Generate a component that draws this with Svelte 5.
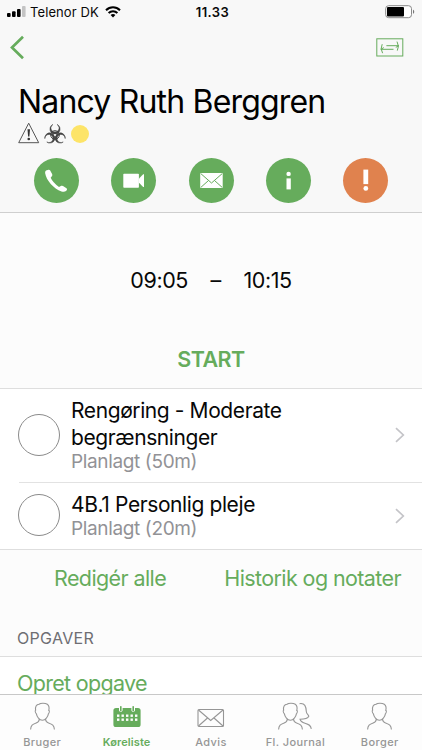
<script lang="ts">
  type Task = { title: string[]; planned: string };

  const name = "Nancy Ruth Berggren";
  const actions = ["phone", "video", "mail", "info", "alert"];

  const tasks: Task[] = [
    { title: ["Rengøring - Moderate", "begrænsninger"], planned: "Planlagt (50m)" },
    { title: ["4B.1 Personlig pleje"], planned: "Planlagt (20m)" },
  ];

  const tabs = [
    { id: "bruger", label: "Bruger", icon: "person" },
    { id: "koreliste", label: "Køreliste", icon: "calendar" },
    { id: "advis", label: "Advis", icon: "mail" },
    { id: "journal", label: "Fl. Journal", icon: "people" },
    { id: "borger", label: "Borger", icon: "person" },
  ];

  let active = $state("koreliste");
</script>

{#snippet person()}
  <path
    d="M5.6 8.2C5 4.6 6.4 2.4 9 2.2C10.6 1 15 .8 17.3 2.2C19.4 3.6 19.3 6.2 18.8 8.4C19.7 8.5 19.5 10.8 18.4 11.8C17.9 14.8 15.5 18 12.4 18.2C9.3 18 6.9 14.8 6.4 11.8C5.2 10.8 4.9 8.5 5.6 8.2ZM9.2 17.2C9.3 19.6 8.6 20.1 6.2 21C2.5 22.3 .8 23.2 .6 27.6M15.6 17.2C15.6 19.6 16.3 20.1 18.6 21C22.3 22.3 24.2 23.2 24.4 27.6"
  />
{/snippet}

<div class="screen">
  <header class="top">
    <div class="status">
      <div class="carrier">
        <svg width="19" height="12" viewBox="0 0 19 12">
          <rect x="0" y="7" width="3.6" height="4" rx="1" />
          <rect x="5" y="5.2" width="3.6" height="5.8" rx="1" />
          <rect x="10" y="3" width="3.6" height="8" rx="1" />
          <rect x="15" y="0" width="3.6" height="11" rx="1" fill="#c4c4c4" />
        </svg>
        <span>Telenor DK</span>
        <svg class="wifi" width="16" height="12" viewBox="0 0 16 12">
          <g fill="none" stroke="#000" stroke-width="2">
            <path d="M1 4.3C5 .3 11 .3 15 4.3" />
            <path d="M3.6 7C6.1 4.5 9.9 4.5 12.4 7" />
          </g>
          <path d="M5.6 8.9C7 7.6 9 7.6 10.4 8.9L8 11.4Z" />
        </svg>
      </div>
      <span class="clock">11.33</span>
      <svg class="battery" width="31" height="14" viewBox="0 0 31 14">
        <rect x=".7" y=".7" width="25.8" height="12" rx="3" fill="#fff" stroke="#888" />
        <rect x="2" y="2" width="17" height="9.4" rx="1" />
        <path d="M28 4.7C29.6 5 29.6 8.4 28 8.7Z" fill="#777" />
      </svg>
    </div>

    <nav class="nav">
      <button aria-label="Tilbage">
        <svg width="15" height="25" viewBox="0 0 15 25">
          <path d="M13 1.8L2 12.5L13 23.2" fill="none" stroke="#66ac5c" stroke-width="2.7" />
        </svg>
      </button>
      <button aria-label="Skift">
        <svg width="28" height="19" viewBox="0 0 28 19" fill="none" stroke="#66ac5c">
          <rect x=".8" y=".8" width="26" height="17.2" />
          <path d="M6.2 6.2Q3.9 10.8 6.6 15.2M4.8 11.3H17.5M21 3.6Q23.7 8.3 21.3 12.6M10.4 7.7H22.7M4.8 11.3L7.8 9.6M22.7 7.7L19.8 9.4" />
        </svg>
      </button>
    </nav>

    <h1>{name}</h1>
    <div class="flags">
      <svg width="22" height="22" viewBox="0 0 22 22">
        <path d="M10.7 1.2L20.7 20.7H.7Z" fill="none" stroke="#555" stroke-width="1" />
        <path d="M9.5 7.3H12L11.4 14.5H10.1Z" fill="#333" />
        <circle cx="10.75" cy="17" r="1.3" fill="#333" />
      </svg>
      <svg class="biohazard" width="22" height="22" viewBox="0 0 22 22" fill="none" stroke="#444">
        <circle cx="11" cy="13" r="4.3" stroke-width="1" />
        {#each [0, 120, 240] as angle}
          <path
            transform="rotate({angle} 11 13)"
            d="M9 2.4A5.1 5.1 0 1 0 13 2.4A4.1 4.1 0 1 1 9 2.4Z"
            fill="#444"
            stroke-width=".5"
          />
        {/each}
        <circle cx="11" cy="13" r=".9" fill="#f8f8f8" stroke="none" />
      </svg>
      <span class="dot"></span>
    </div>

    <div class="actions">
      {#each actions as action}
        <button class="action" class:alert={action === "alert"} aria-label={action}>
          <svg width="45" height="45" viewBox="0 0 45 45" fill="#fff">
            {#if action === "phone"}
              <path d="M12 12.5L14.5 11.7Q15.7 11.5 16.2 12.6L18.2 16.3Q18.6 17.2 18 18L16.7 19.8Q18.7 24.5 25 29L27.3 27.8Q28.2 27.4 29 28L32.5 30.3Q33.3 31 32.9 31.9L32 33Q30.5 34.3 27.5 33.5C19.5 30.5 12.3 22.5 11.1 15Q11 13.2 12 12.5Z" />
            {:else if action === "video"}
              <rect x="12.3" y="15.7" width="15.6" height="14" rx=".7" />
              <path d="M28 20.5L32.2 16.3H33V29H32.2L28 24.8Z" />
            {:else if action === "mail"}
              <rect x="11.2" y="15" width="22.5" height="15" rx=".6" />
              <path d="M11.7 15.5L22.5 25L33.3 15.5M11.7 29.5L19.5 22.5M33.3 29.5L25.5 22.5" fill="none" stroke="#66ac5c" />
            {:else if action === "info"}
              <circle cx="22.6" cy="15.9" r="2.2" />
              <rect x="20.5" y="20.4" width="4.3" height="11" />
            {:else}
              <rect x="20.4" y="11.6" width="4.8" height="14.5" />
              <circle cx="22.8" cy="30.4" r="2.4" />
            {/if}
          </svg>
        </button>
      {/each}
    </div>
  </header>

  <section class="visit">
    <div class="times">
      <span>09:05</span>
      <span>–</span>
      <span>10:15</span>
    </div>
    <button class="start">START</button>
  </section>

  <ul class="tasks">
    {#each tasks as task}
      <li>
        <span class="check"></span>
        <div class="task">
          <div class="text">
            {#each task.title as line}
              <div class="title">{line}</div>
            {/each}
            <div class="planned">{task.planned}</div>
          </div>
          <svg width="10" height="16" viewBox="0 0 10 16">
            <path d="M1 1.2L8.3 8L1 14.8" fill="none" stroke="#c4c4c8" stroke-width="1.7" />
          </svg>
        </div>
      </li>
    {/each}
  </ul>

  <div class="links">
    <button class="edit">Redigér alle</button>
    <button class="history">Historik og notater</button>
  </div>

  <h2>OPGAVER</h2>
  <div class="create">
    <button>Opret opgave</button>
  </div>

  <nav class="tabs">
    {#each tabs as tab}
      <button class:active={active === tab.id} onclick={() => (active = tab.id)}>
        {#if tab.icon === "person"}
          <svg width="25" height="29" viewBox="0 0 25 29">{@render person()}</svg>
        {:else if tab.icon === "calendar"}
          <svg width="28" height="29" viewBox="0 0 28 29">
            <path
              class="solid"
              d="M3 6H6V8.5Q7.8 11.5 9.6 8.5V6H18.4V8.5Q20.2 11.5 22 8.5V6H25Q27.6 6 27.6 8.6V22.4Q27.6 25 25 25H3Q.4 25 .4 22.4V8.6Q.4 6 3 6Z"
            />
            <rect class="solid" x="7" y="4" width="1.6" height="5.5" rx=".7" />
            <rect class="solid" x="19.4" y="4" width="1.6" height="5.5" rx=".7" />
            {#each [12.5, 16.5] as y}
              {#each [4, 8.5, 13, 17.5, 22] as x}
                <rect class="hole" {x} {y} width="2.4" height="2.4" />
              {/each}
            {/each}
          </svg>
        {:else if tab.icon === "mail"}
          <svg width="28" height="29" viewBox="0 0 28 29">
            <rect x="1" y="7.5" width="25.5" height="17" rx="1" />
            <path d="M1.5 8L13.7 18.5L26 8M1.5 24L10.5 16M26 24L17 16" />
          </svg>
        {:else}
          <svg width="34" height="29" viewBox="0 0 34 29">
            {@render person()}
            <path d="M21.5 1.7C27 .8 28 4.5 28.3 9.5C28.5 12.3 30.6 12.7 30.8 14.2C29.5 17 25 17.2 22 17.2C22.5 19.5 23.5 20.2 27 21.2C31.2 22.5 32.8 23.5 33.3 26.8" />
          </svg>
        {/if}
        <span>{tab.label}</span>
      </button>
    {/each}
  </nav>
</div>

<style>
  :global(body) {
    margin: 0;
    overflow: hidden;
  }

  .screen {
    width: 422px;
    height: 750px;
    display: flex;
    flex-direction: column;
    overflow: hidden;
    background: #fcfcfc;
    color: #080808;
    font-family: Inter, "Liberation Sans", sans-serif;
  }

  button {
    padding: 0;
    border: none;
    background: none;
    color: #66ac5c;
    font: inherit;
    letter-spacing: inherit;
    white-space: nowrap;
  }

  svg {
    display: block;
    flex-shrink: 0;
  }

  .top {
    height: 212px;
    flex-shrink: 0;
    background: #f8f8f8;
    border-bottom: 1px solid #cfcfcf;
  }

  .status {
    height: 24px;
    display: grid;
    grid-template-columns: 1fr auto 1fr;
    align-items: center;
    padding: 0 6px 0 7px;
    box-sizing: border-box;
    font-size: 13px;
  }

  .carrier {
    display: flex;
    align-items: center;
    gap: 4px;
    letter-spacing: 0.1px;
  }

  .wifi {
    margin-left: 2px;
  }

  .clock {
    padding-left: 2px;
    font-weight: 600;
    letter-spacing: 0.4px;
  }

  .battery {
    justify-self: end;
  }

  .nav {
    height: 46px;
    display: flex;
    align-items: center;
    justify-content: space-between;
    padding: 0 18px 0 10px;
  }

  h1 {
    margin: 12px 0 0 18px;
    font-size: 32px;
    line-height: 40px;
    font-weight: 400;
    letter-spacing: -0.82px;
    color: #000;
    white-space: nowrap;
  }

  .flags {
    height: 22px;
    display: flex;
    align-items: center;
    padding-left: 18px;
  }

  .biohazard {
    margin: 0 5px 0 4px;
  }

  .dot {
    width: 18px;
    height: 18px;
    margin-top: 2px;
    border-radius: 50%;
    background: #fde468;
  }

  .actions {
    display: flex;
    justify-content: space-between;
    padding: 14px 34px 0;
  }

  .action {
    width: 45px;
    height: 45px;
    border-radius: 50%;
    background: #66ac5c;
  }

  .action.alert {
    background: #e0824e;
  }

  .visit {
    height: 175px;
    flex-shrink: 0;
    display: flex;
    flex-direction: column;
    align-items: center;
  }

  .times {
    display: flex;
    gap: 22.5px;
    margin-top: 53px;
    font-size: 21.5px;
    line-height: 28px;
    letter-spacing: -0.4px;
  }

  .start {
    margin-top: 51px;
    font-size: 21.5px;
    line-height: 28px;
    font-weight: 600;
    letter-spacing: -0.5px;
  }

  .tasks {
    margin: 0;
    padding: 0;
    list-style: none;
    background: #fff;
    border-top: 1px solid #dedede;
    border-bottom: 1px solid #dedede;
  }

  li {
    display: flex;
    align-items: center;
    padding-left: 18px;
  }

  .check {
    width: 40px;
    height: 40px;
    margin-right: -41px;
    margin-bottom: 1px;
    border: 1px solid #8b8b8b;
    border-radius: 50%;
  }

  .task {
    flex: 1;
    display: flex;
    align-items: center;
    justify-content: space-between;
    padding: 8px 17px 9px 52px;
  }

  li + li .task {
    border-top: 1px solid #e2e2e2;
  }

  .title {
    font-size: 21px;
    line-height: 27px;
    letter-spacing: -0.4px;
  }

  .planned {
    font-size: 19px;
    line-height: 22px;
    letter-spacing: -0.36px;
    color: #929296;
  }

  .links {
    display: flex;
    justify-content: space-between;
    padding: 14px 21px 0 54px;
    font-size: 21.5px;
    line-height: 28px;
    letter-spacing: -0.6px;
  }

  h2 {
    margin: 34px 0 0 17px;
    font-size: 16px;
    line-height: 24px;
    font-weight: 400;
    letter-spacing: 0.3px;
    color: #6e6e73;
  }

  .create {
    flex: 1;
    min-height: 0;
    display: flex;
    align-items: flex-end;
    margin-top: 6px;
    padding-left: 17px;
    background: #fff;
    border-top: 1px solid #dedede;
    font-size: 21.5px;
    line-height: 22px;
    letter-spacing: -0.7px;
  }

  .tabs {
    height: 55px;
    flex-shrink: 0;
    display: grid;
    grid-template-columns: repeat(5, 1fr);
    background: #fdfdfd;
    border-top: 1px solid #c8c8c8;
  }

  .tabs button {
    display: flex;
    flex-direction: column;
    align-items: center;
    padding-top: 7px;
    color: #969696;
    font-size: 11px;
    line-height: 14px;
    font-weight: 500;
    letter-spacing: 0.4px;
  }

  .tabs button.active {
    color: #66ac5c;
    font-weight: 600;
    letter-spacing: 0.1px;
  }

  .tabs svg {
    margin-bottom: 4px;
    fill: none;
    stroke: currentColor;
    stroke-width: 1.1;
  }

  .tabs .solid {
    fill: currentColor;
    stroke: none;
  }

  .tabs .hole {
    fill: #fdfdfd;
    stroke: none;
  }
</style>
